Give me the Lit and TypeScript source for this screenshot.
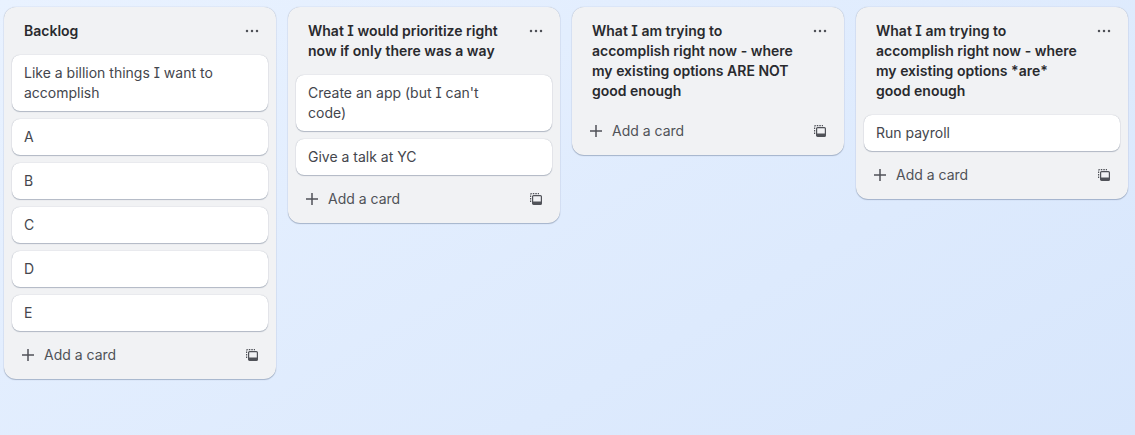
import { LitElement, html, css } from "lit";
import { customElement } from "lit/decorators.js";

const columns: { title: string; cards: string[] }[] = [
  {
    title: "Backlog",
    cards: ["Like a billion things I want to accomplish", "A", "B", "C", "D", "E"],
  },
  {
    title: "What I would prioritize right now if only there was a way",
    cards: ["Create an app (but I can't code)", "Give a talk at YC"],
  },
  {
    title: "What I am trying to accomplish right now - where my existing options ARE NOT good enough",
    cards: [],
  },
  {
    title: "What I am trying to accomplish right now - where my existing options *are* good enough",
    cards: ["Run payroll"],
  },
];

@customElement("app-root")
export class AppRoot extends LitElement {
  static styles = css`
    :host {
      display: block;
      height: 435px;
      overflow: hidden;
      font-family: Inter, "Liberation Sans", sans-serif;
      font-size: 14px;
      line-height: 20px;
      font-feature-settings: "cv08" 1;
      color: #44464d;
    }
    .board {
      box-sizing: border-box;
      height: 100%;
      display: flex;
      align-items: flex-start;
      gap: 12px;
      padding: 7px 4px 0;
      background: linear-gradient(150deg, #e9f2ff 0%, #d7e6fc 100%);
    }
    .column {
      flex: 0 0 272px;
      box-sizing: border-box;
      background: #f1f2f4;
      border-radius: 12px;
      box-shadow: 0 1px 1px #091e4240, 0 0 1px #091e424f;
    }
    .header {
      display: flex;
      align-items: flex-start;
      justify-content: space-between;
      padding: 14px 16px 14px 20px;
    }
    .title {
      width: 206px;
      font-weight: 600;
      color: #292a2e;
    }
    .more {
      display: block;
      width: 16px;
      height: 20px;
      color: #505258;
      flex: none;
    }
    .list {
      display: flex;
      flex-direction: column;
      gap: 8px;
      padding: 0 8px 8px;
    }
    .card {
      background: #fff;
      border-radius: 8px;
      padding: 8px 12px;
      box-shadow: 0 1px 1px #091e4240, 0 0 1px #091e424f;
    }
    .card span {
      display: block;
      max-width: 200px;
    }
    .footer {
      display: flex;
      align-items: center;
      justify-content: space-between;
      height: 32px;
      padding: 0 18px 8px 18px;
    }
    .add {
      display: flex;
      align-items: center;
      gap: 10px;
      color: #505258;
    }
    .icon {
      display: block;
      flex: none;
      color: #505258;
    }
  `;

  render() {
    return html`
      <div class="board">
        ${columns.map(
          (c) => html`
            <section class="column">
              <div class="header">
                <div class="title">${c.title}</div>
                <svg class="more" viewBox="0 0 16 20" fill="currentColor">
                  <circle cx="3" cy="10" r="1.25"></circle>
                  <circle cx="8" cy="10" r="1.25"></circle>
                  <circle cx="13" cy="10" r="1.25"></circle>
                </svg>
              </div>
              ${c.cards.length
                ? html`<div class="list">
                    ${c.cards.map((t) => html`<div class="card"><span>${t}</span></div>`)}
                  </div>`
                : ""}
              <div class="footer">
                <div class="add">
                  <svg class="icon" width="12" height="12" viewBox="0 0 12 12" fill="none" stroke="currentColor" stroke-width="1.5">
                    <path d="M6 0v12M0 6h12"></path>
                  </svg>
                  <span>Add a card</span>
                </div>
                <svg class="icon" width="12" height="12" viewBox="0 0 12 12" fill="none" stroke="currentColor" stroke-width="1.2">
                  <path d="M.6 9V1.600a1 1 0 0 1 1-1H9" stroke-dasharray="1.500 1"></path>
                  <rect x="2.600" y="2.600" width="8.800" height="8.800" rx="1"></rect>
                  <path d="M3 8.500h8v2.500H3z" fill="currentColor" stroke="none"></path>
                </svg>
              </div>
            </section>
          `
        )}
      </div>
    `;
  }
}
